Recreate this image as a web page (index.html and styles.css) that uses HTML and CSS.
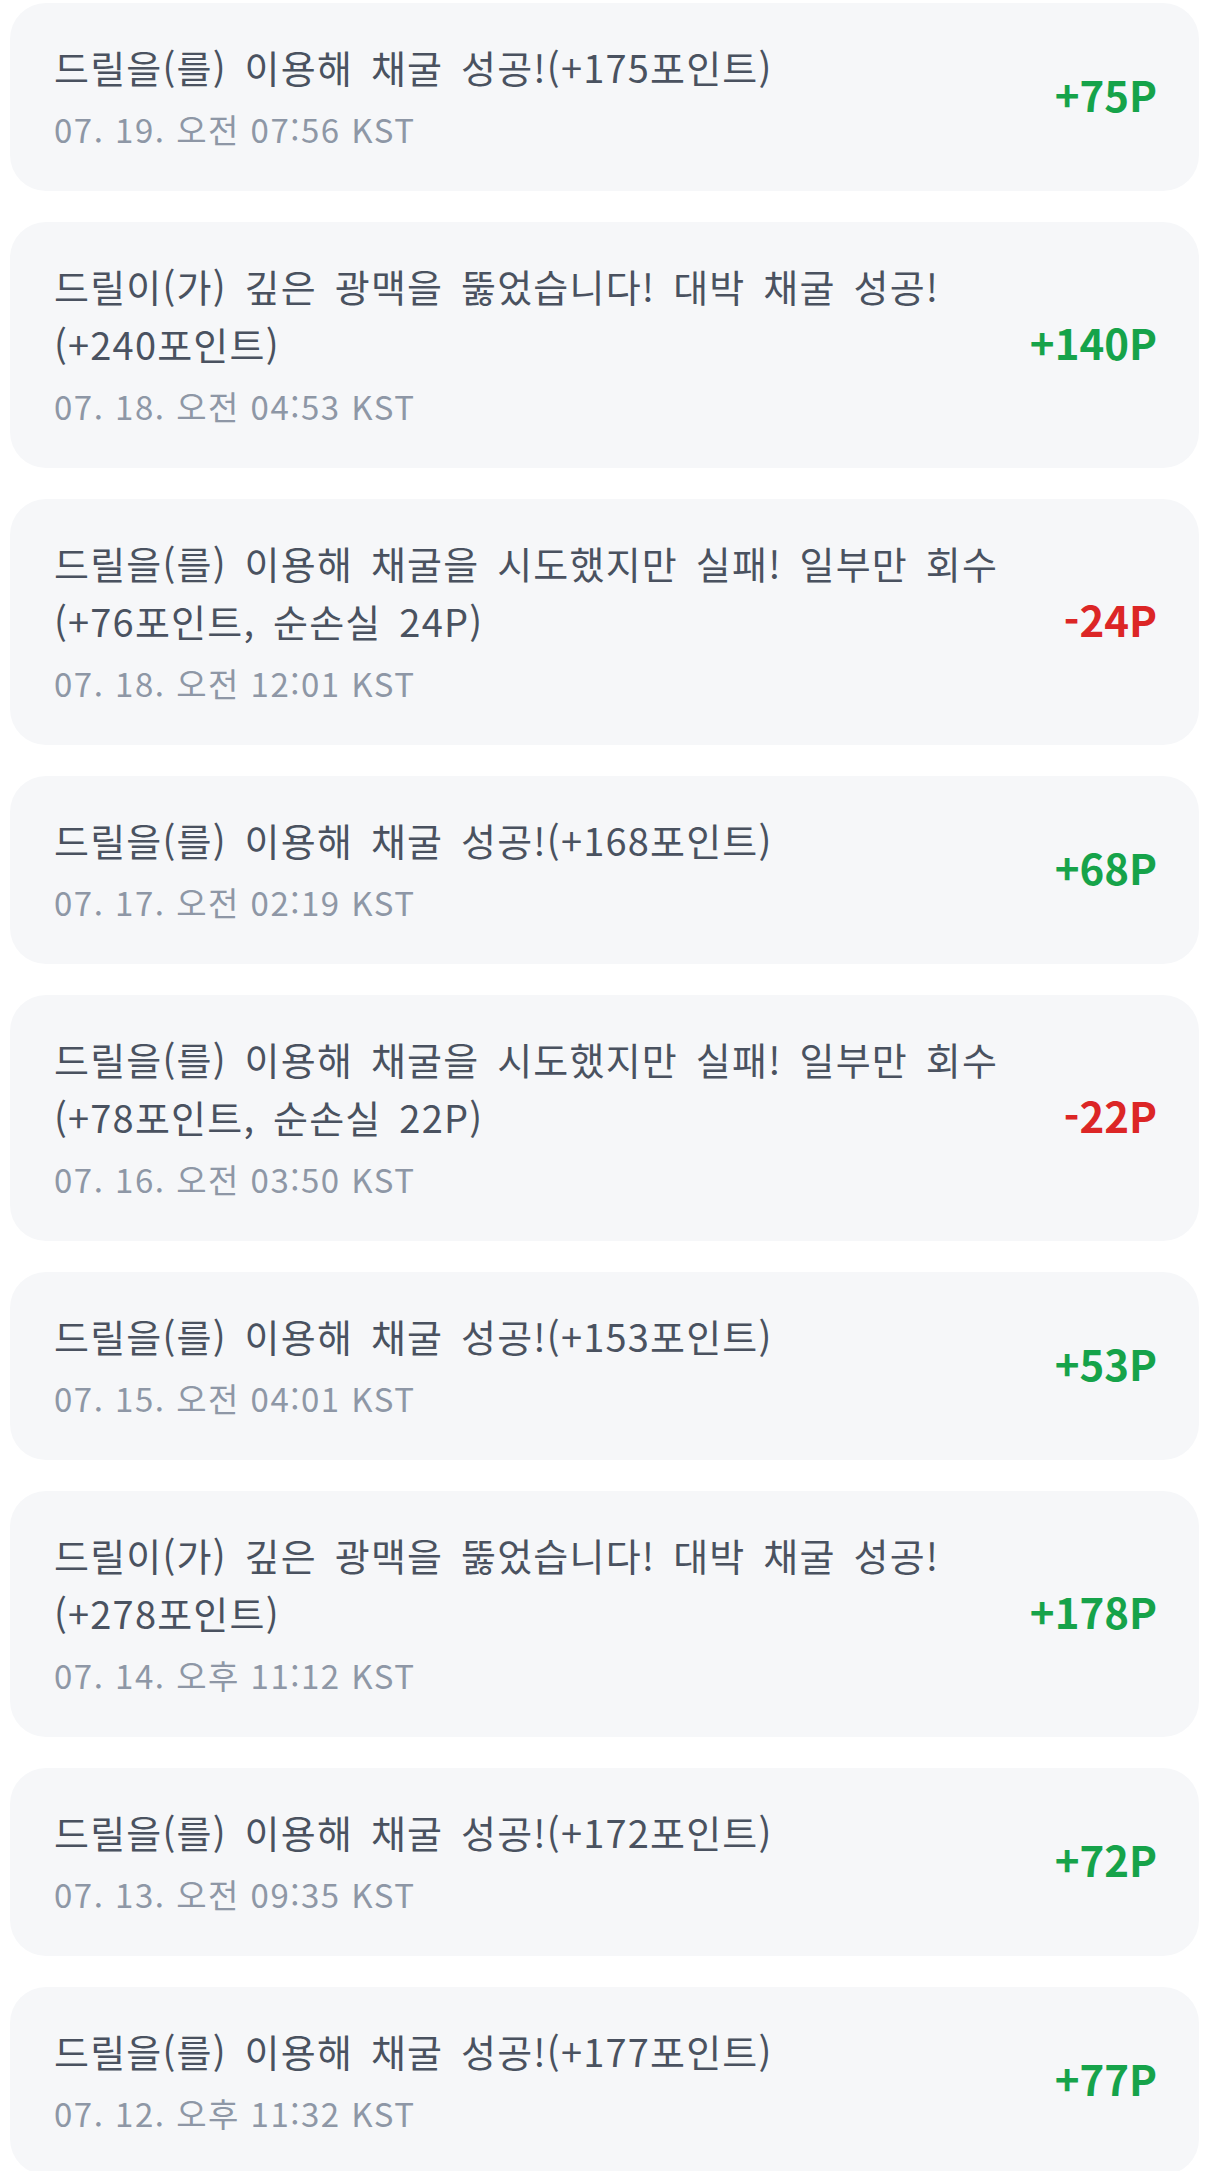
FILE: index.html
```html
<!DOCTYPE html>
<html lang="ko">
<head>
    <meta charset="UTF-8">
    <meta name="viewport" content="width=device-width, initial-scale=1.0">
    <title>채굴 기록</title>
    <link rel="stylesheet" href="styles.css">
</head>
<body>

    <div class="history-list">
        <div class="history-item">
            <div class="history-info">
                <div class="history-title">드릴을(를) 이용해 채굴 성공!(+175포인트)</div>
                <div class="history-date">07. 19. 오전 07:56 KST</div>
            </div>
            <div class="history-amount plus">+75P</div>
        </div>

        <div class="history-item">
            <div class="history-info">
                <div class="history-title">드릴이(가) 깊은 광맥을 뚫었습니다! 대박 채굴 성공!(+240포인트)</div>
                <div class="history-date">07. 18. 오전 04:53 KST</div>
            </div>
            <div class="history-amount plus">+140P</div>
        </div>

        <div class="history-item">
            <div class="history-info">
                <div class="history-title">드릴을(를) 이용해 채굴을 시도했지만 실패! 일부만 회수 (+76포인트, 순손실 24P)</div>
                <div class="history-date">07. 18. 오전 12:01 KST</div>
            </div>
            <div class="history-amount minus">-24P</div>
        </div>

        <div class="history-item">
            <div class="history-info">
                <div class="history-title">드릴을(를) 이용해 채굴 성공!(+168포인트)</div>
                <div class="history-date">07. 17. 오전 02:19 KST</div>
            </div>
            <div class="history-amount plus">+68P</div>
        </div>

        <div class="history-item">
            <div class="history-info">
                <div class="history-title">드릴을(를) 이용해 채굴을 시도했지만 실패! 일부만 회수 (+78포인트, 순손실 22P)</div>
                <div class="history-date">07. 16. 오전 03:50 KST</div>
            </div>
            <div class="history-amount minus">-22P</div>
        </div>

        <div class="history-item">
            <div class="history-info">
                <div class="history-title">드릴을(를) 이용해 채굴 성공!(+153포인트)</div>
                <div class="history-date">07. 15. 오전 04:01 KST</div>
            </div>
            <div class="history-amount plus">+53P</div>
        </div>

        <div class="history-item">
            <div class="history-info">
                <div class="history-title">드릴이(가) 깊은 광맥을 뚫었습니다! 대박 채굴 성공!(+278포인트)</div>
                <div class="history-date">07. 14. 오후 11:12 KST</div>
            </div>
            <div class="history-amount plus">+178P</div>
        </div>

        <div class="history-item">
            <div class="history-info">
                <div class="history-title">드릴을(를) 이용해 채굴 성공!(+172포인트)</div>
                <div class="history-date">07. 13. 오전 09:35 KST</div>
            </div>
            <div class="history-amount plus">+72P</div>
        </div>

        <div class="history-item">
            <div class="history-info">
                <div class="history-title">드릴을(를) 이용해 채굴 성공!(+177포인트)</div>
                <div class="history-date">07. 12. 오후 11:32 KST</div>
            </div>
            <div class="history-amount plus">+77P</div>
        </div>
    </div>

</body>
</html>
```

FILE: styles.css
```css
:root {
    --card-bg: #f6f7f9;
    --title-color: #4a5260;
    --date-color: #8e97a6;
    --plus-color: #16a34a;
    --minus-color: #dc2626;
}

body {
    margin: 0;
    padding: 0;
    background-color: #ffffff;
    font-family: "Noto Sans CJK KR", "Noto Sans", sans-serif;
}

.history-list {
    display: flex;
    flex-direction: column;
    gap: 31px;
    padding: 3px 6px 0 10px;
}

.history-item {
    display: flex;
    align-items: center;
    justify-content: space-between;
    gap: 24px;
    padding: 35px 42px 42px 44px;
    background-color: var(--card-bg);
    border-radius: 36px;
}

.history-info {
    flex: 1;
    min-width: 0;
}

.history-title {
    font-size: 38px;
    line-height: 58px;
    letter-spacing: 1.2px;
    word-spacing: 6px;
    color: var(--title-color);
    word-break: keep-all;
}

.history-date {
    margin-top: 13px;
    font-size: 33px;
    line-height: 40px;
    letter-spacing: 1.5px;
    color: var(--date-color);
}

.history-amount {
    font-size: 42px;
    font-weight: bold;
    white-space: nowrap;
}

.history-amount.plus {
    color: var(--plus-color);
}

.history-amount.minus {
    color: var(--minus-color);
}
```
